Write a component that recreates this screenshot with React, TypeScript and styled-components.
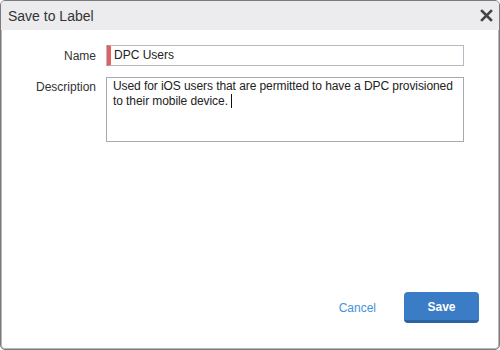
import React from "react";
import styled, { createGlobalStyle } from "styled-components";

const Global = createGlobalStyle`
  html, body {
    margin: 0;
    padding: 0;
    background: #fff;
  }
  * {
    box-sizing: border-box;
  }
`;

export default function App() {
  return (
    <>
      <Global />
      <Dialog>
        <Header>
          <Title>Save to Label</Title>
          <Close aria-label="Close">
            <svg width="13" height="13" viewBox="0 0 13 13">
              <path
                d="M2 2 L11 11 M11 2 L2 11"
                stroke="#444"
                strokeWidth="2.6"
                strokeLinecap="square"
              />
            </svg>
          </Close>
        </Header>
        <Body>
          <Form>
            <Label>Name</Label>
            <Field required>DPC Users</Field>
            <Label top>Description</Label>
            <Area>
              Used for iOS users that are permitted to have a DPC provisioned
              to their mobile device.
              <Caret />
            </Area>
          </Form>
        </Body>
        <Footer>
          <LinkButton>Cancel</LinkButton>
          <PrimaryButton>Save</PrimaryButton>
        </Footer>
      </Dialog>
    </>
  );
}

const Dialog = styled.div`
  width: 500px;
  height: 350px;
  display: flex;
  flex-direction: column;
  border: 1px solid #7a7a7a;
  box-shadow: inset 1px 0 0 #b8b8b8, inset -1px 0 0 #b8b8b8, inset 0 -1px 0 #b8b8b8;
  border-radius: 5px;
  overflow: hidden;
  background: #fff;
  font-family: "Liberation Sans", Arial, sans-serif;
  color: #333;
`;
const Header = styled.div`
  height: 29px;
  display: flex;
  align-items: center;
  justify-content: space-between;
  padding: 0 6px 0 7px;
  background: #ececee;
`;
const Title = styled.span`
  font-size: 14px;
  color: #333;
`;
const Close = styled.button`
  border: 0;
  background: none;
  padding: 0;
  width: 14px;
  height: 14px;
  display: flex;
  align-items: center;
  justify-content: center;
  cursor: pointer;
`;
const Body = styled.div`
  flex: 1;
  padding: 15px 35px 0 0;
`;
const Form = styled.div`
  display: grid;
  grid-template-columns: 95px 1fr;
  column-gap: 10px;
  row-gap: 11px;
  align-items: center;
`;
const Label = styled.div<{ top?: boolean }>`
  font-size: 12px;
  text-align: right;
  color: #333;
  align-self: ${(p) => (p.top ? "start" : "center")};
  padding-top: ${(p) => (p.top ? "3px" : "0")};
`;
const Field = styled.div<{ required?: boolean }>`
  height: 21px;
  border: 1px solid #b9b9c3;
  border-left: ${(p) => (p.required ? "4px solid #e0625e" : "1px solid #b9b9c3")};
  box-shadow: ${(p) => (p.required ? "-1px 0 0 #b9b9c3" : "none")};
  margin-left: ${(p) => (p.required ? "1px" : "0")};
  padding: 0 0 0 3px;
  font-size: 12px;
  line-height: 19px;
  color: #222;
`;
const Area = styled.div`
  height: 65px;
  border: 1px solid #a9a9ad;
  padding: 1px 0 1px 6px;
  font-size: 12px;
  letter-spacing: -0.08px;
  line-height: 15px;
  color: #222;
`;
const Caret = styled.span`
  display: inline-block;
  width: 1px;
  height: 14px;
  margin-left: 3px;
  background: #111;
  vertical-align: -3px;
`;
const Footer = styled.div`
  display: flex;
  justify-content: flex-end;
  align-items: center;
  gap: 28px;
  padding: 0 20px 26px 0;
`;
const LinkButton = styled.button`
  border: 0;
  background: none;
  padding: 0;
  font-family: inherit;
  font-size: 12px;
  color: #4a90d9;
  cursor: pointer;
`;
const PrimaryButton = styled.button`
  width: 75px;
  height: 31px;
  border: 0;
  border-bottom: 3px solid #2c63a3;
  border-radius: 4px;
  background: #3a7cc6;
  color: #fff;
  font-family: inherit;
  font-size: 12px;
  font-weight: bold;
  padding: 2px 0 0;
  cursor: pointer;
`;
